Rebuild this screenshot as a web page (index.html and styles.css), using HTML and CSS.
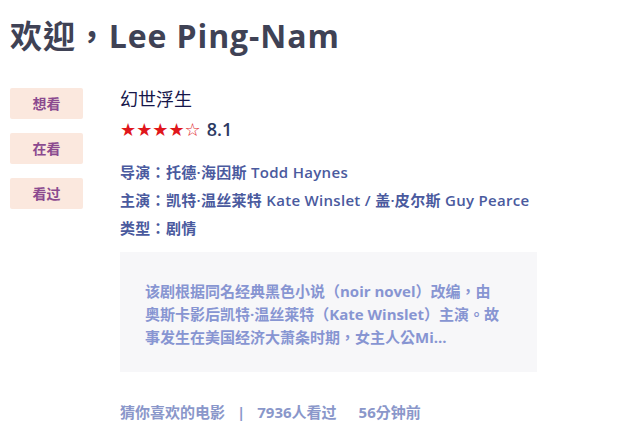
FILE: index.html
```html
<!DOCTYPE html>
<html lang="zh-TW">
<head>
<meta charset="utf-8">
<link rel="stylesheet" href="styles.css">
</head>
<body>
<h1 class="welcome">欢迎，Lee Ping-Nam</h1>
<div class="main">
  <div class="tabs">
    <span class="tab">想看</span>
    <span class="tab">在看</span>
    <span class="tab">看过</span>
  </div>
  <div class="movie">
    <div class="title">幻世浮生</div>
    <div class="rating"><span class="stars">★★★★☆</span><span class="score">8.1</span></div>
    <div class="info">
      <div>导演：托德·海因斯 Todd Haynes</div>
      <div>主演：凯特·温丝莱特 Kate Winslet / 盖·皮尔斯 Guy Pearce</div>
      <div>类型：剧情</div>
    </div>
    <div class="desc">该剧根据同名经典黑色小说（noir novel）改编，由奥斯卡影后凯特·温丝莱特（Kate Winslet）主演。故事发生在美国经济大萧条时期，女主人公Mi...</div>
    <div class="foot"><span>猜你喜欢的电影</span><span class="sep">|</span><span>7936人看过</span><span class="time">56分钟前</span></div>
  </div>
</div>
</body>
</html>
```
FILE: styles.css
```css
body {
  margin: 0;
  padding: 0 10px;
  background: #ffffff;
  font-family: "Open Sans", "Noto Sans CJK TC", sans-serif;
}
.welcome {
  margin: 0;
  padding-top: 14px;
  font-size: 32px;
  line-height: 44px;
  font-weight: 700;
  color: #3f4255;
  letter-spacing: 0.9px;
}
.main {
  display: flex;
  margin-top: 30px;
}
.tabs {
  display: flex;
  flex-direction: column;
  gap: 14px;
  width: 110px;
  flex-shrink: 0;
}
.tab {
  width: 73px;
  height: 31px;
  line-height: 31px;
  text-align: center;
  background: #fbe8de;
  color: #8b4a8f;
  font-size: 14px;
  font-weight: 700;
  border-radius: 2px;
}
.movie {
  display: flex;
  flex-direction: column;
}
.title {
  font-size: 18px;
  line-height: 24px;
  color: #16164a;
  margin-top: -1px;
}
.rating {
  display: flex;
  align-items: center;
  margin-top: 6px;
  height: 24px;
}
.stars {
  color: #e0161b;
  font-family: "DejaVu Sans", sans-serif;
  font-size: 18px;
}
.score {
  margin-left: 6px;
  font-size: 18px;
  font-weight: 600;
  color: #2d3a63;
}
.info {
  margin-top: 17px;
  font-size: 15px;
  line-height: 28px;
  color: #4a5a9e;
  font-weight: 600;
  letter-spacing: 0.3px;
}
.desc {
  margin-top: 10px;
  width: 417px;
  box-sizing: border-box;
  padding: 28px 32px 23px 25px;
  background: #f7f7f9;
  color: #8795d2;
  font-size: 15px;
  line-height: 23px;
  font-weight: 700;
}
.foot {
  margin-top: 28px;
  font-size: 15px;
  line-height: 24px;
  font-weight: 700;
  color: #8a97ca;
}
.sep {
  margin: 0 12px;
}
.time {
  margin-left: 22px;
}
```
